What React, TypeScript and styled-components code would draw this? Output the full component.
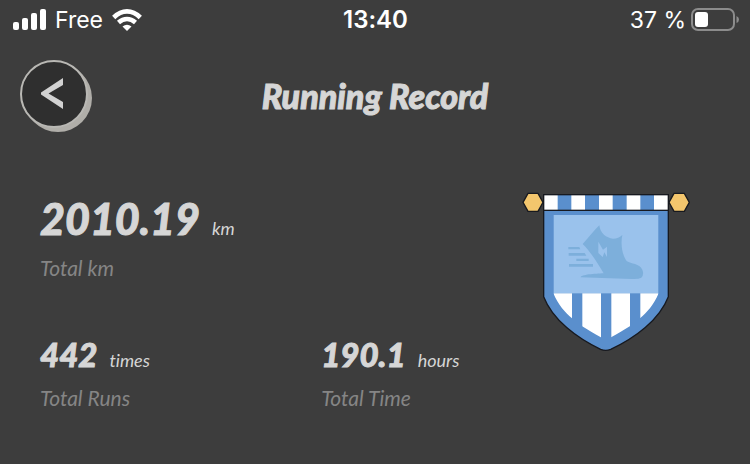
import React from "react";
import styled, { createGlobalStyle } from "styled-components";

const GlobalStyle = createGlobalStyle`
  * {
    box-sizing: border-box;
  }

  html {
    background: #3d3d3d;
  }

  body {
    margin: 0;
    color: #d6d6d6;
    font-family: Lato, "Open Sans", sans-serif;
    font-variant-ligatures: none;
  }
`;

const StatusBar = styled.div`
  display: grid;
  grid-template-columns: 1fr auto 1fr;
  align-items: center;
  height: 40px;
  padding: 0 11px 0 12px;
  color: #fff;
  font-family: Inter, "Liberation Sans", sans-serif;
  font-size: 23px;
  line-height: 28px;
`;

const StatusGroup = styled.div<{ $end?: boolean }>`
  display: flex;
  align-items: center;
  justify-content: ${({ $end }) => ($end ? "flex-end" : "flex-start")};
  gap: ${({ $end }) => ($end ? "5px" : "9px")};
`;

const Clock = styled.time`
  font-size: 24px;
  font-weight: 600;
`;

const Header = styled.header`
  display: grid;
  grid-template-columns: 72px 1fr 72px;
  align-items: center;
  padding: 20px;
`;

const BackButton = styled.button`
  display: flex;
  align-items: center;
  justify-content: center;
  width: 68px;
  height: 68px;
  margin-bottom: 4px;
  padding: 0 5px 0 0;
  border: 2px solid #b9b8b4;
  border-radius: 50%;
  background: #2f2f2f;
  box-shadow: 2px 2px 0 #b0aea9, 4px 4px 0 #b0aea9;
  cursor: pointer;
`;

const Title = styled.h1`
  margin: 0;
  font-size: 34px;
  font-style: italic;
  font-weight: 900;
  line-height: 40px;
  text-align: center;
  -webkit-text-stroke: 1px currentColor;
`;

const Summary = styled.main`
  display: flex;
  align-items: flex-start;
  padding: 38px 60px 38px 40px;
`;

const Stats = styled.dl`
  flex: 1;
  display: grid;
  grid-template-columns: 7fr 5fr;
  row-gap: 56px;
  margin: 5px 0 0;
  font-style: italic;
`;

const StatItem = styled.div<{ $wide?: boolean }>`
  display: flex;
  flex-direction: column-reverse;
  gap: ${({ $wide }) => ($wide ? "2px" : "8px")};
  grid-column: ${({ $wide }) => ($wide ? "1 / -1" : "auto")};
`;

const Label = styled.dt`
  color: #858585;
  font-size: 21px;
  line-height: 28px;
`;

const Value = styled.dd<{ $large?: boolean }>`
  display: flex;
  align-items: baseline;
  gap: 12px;
  margin: 0;
  font-size: ${({ $large }) => ($large ? "43px" : "33px")};
  font-weight: 900;
  line-height: ${({ $large }) => ($large ? "48px" : "32px")};
  -webkit-text-stroke: 1px currentColor;
`;

const Unit = styled.span`
  font-size: 18px;
  font-weight: 400;
  -webkit-text-stroke: 0;
`;

function SignalIcon() {
  return (
    <svg width="34" height="22" viewBox="0 0 34 22" fill="#fff" aria-hidden="true">
      <rect x="1" y="13" width="6" height="8" rx="2" />
      <rect x="10" y="9" width="6" height="12" rx="2" />
      <rect x="19" y="4" width="6" height="17" rx="2" />
      <rect x="28" y="0" width="6" height="21" rx="2" />
    </svg>
  );
}

function WifiIcon() {
  return (
    <svg width="30" height="22" viewBox="0 0 30 22" aria-hidden="true">
      <g fill="none" stroke="#fff" strokeWidth="4.600">
        <path d="M1.700 8.500Q8 2.400 15 2.400T28.300 8.500" />
        <path d="M6.500 13.500Q10.500 10 15 10T23.500 13.500" />
      </g>
      <path d="M10.500 17.500Q15 14 19.500 17.500L15 22Z" fill="#fff" />
    </svg>
  );
}

function BatteryIcon() {
  return (
    <svg width="48" height="24" viewBox="0 0 48 24" aria-hidden="true">
      <rect x="1" y="1" width="42" height="21" rx="6" fill="none" stroke="#8c8c8c" strokeWidth="2" />
      <rect x="4" y="4" width="13" height="15" rx="3" fill="#fff" />
      <path d="M45.5 8Q48 9 48 11.500T45.500 15Z" fill="#8c8c8c" />
    </svg>
  );
}

function BackIcon() {
  return (
    <svg width="24" height="32" viewBox="0 0 24 32" aria-hidden="true">
      <path d="M23 0V7L8.500 15.500L23 24V31L1 16.500V14.500Z" fill="#d2d2d2" />
    </svg>
  );
}

function PennantBadge() {
  return (
    <svg width="168" height="164" viewBox="36 30 504 492" role="img" aria-label="Running badge">
      <defs>
        <clipPath id="pennant-inner">
          <path d="M130 105H446V340C431 375 411 397 390 415C366 437 330 458 288 480C246 458 210 437 186 415C165 397 145 375 130 340Z" />
        </clipPath>
      </defs>
      <path
        d="M101 88H475V350C448 420 375 474 302 508Q287 514 272 508C201 474 128 420 101 350Z"
        fill="#5a8fcd"
        stroke="#17191f"
        strokeWidth="4"
      />
      <g clipPath="url(#pennant-inner)">
        <rect x="130" y="105" width="316" height="235" fill="#9ac2ec" />
        <g fill="#fff">
          <rect x="130" y="340" width="56" height="150" />
          <rect x="217" y="340" width="56" height="150" />
          <rect x="304" y="340" width="56" height="150" />
          <rect x="391" y="340" width="55" height="150" />
        </g>
      </g>
      <g fill="#7dafdb">
        <path d="M268 136C270 160 289 174 309 176Q326 176 337 165C331 194 337 225 350 243C364 252 388 250 397 269Q403 284 394 293Q386 298 365 297L212 292C212 284 255 281 281 280C265 253 245 219 218 192C235 174 250 153 268 136Z" />
        <path d="M175 201H208L211 208H175ZM176 219H224L229 227H176ZM199 236H236V243H199ZM177 252H249V260H177Z" />
      </g>
      <path d="M265 185L279 209L291 200V231L283 217L278 231L265 219Z" fill="#9ac2ec" />
      <rect x="101" y="44" width="374" height="47" fill="#fff" />
      <g fill="#5a8fcd">
        <rect x="143" y="44" width="41" height="47" />
        <rect x="225" y="44" width="42" height="47" />
        <rect x="308" y="44" width="42" height="47" />
        <rect x="391" y="44" width="41" height="47" />
      </g>
      <rect x="101" y="44" width="374" height="47" fill="none" stroke="#17191f" strokeWidth="4" />
      <g fill="#f3c66d" stroke="#17191f" strokeWidth="4">
        <path d="M54 40H84L99 67L84 94H54L39 67Z" />
        <path d="M492 40H523L538 67L523 94H492L477 67Z" />
      </g>
    </svg>
  );
}

type StatProps = {
  label: string;
  value: string;
  unit: string;
  large?: boolean;
};

function Stat({ label, value, unit, large }: StatProps) {
  return (
    <StatItem $wide={large}>
      <Label>{label}</Label>
      <Value $large={large}>
        {value}
        <Unit>{unit}</Unit>
      </Value>
    </StatItem>
  );
}

function App() {
  return (
    <>
      <GlobalStyle />
      <StatusBar>
        <StatusGroup>
          <SignalIcon />
          <span>Free</span>
          <WifiIcon />
        </StatusGroup>
        <Clock>13:40</Clock>
        <StatusGroup $end>
          <span>37 %</span>
          <BatteryIcon />
        </StatusGroup>
      </StatusBar>

      <Header>
        <BackButton type="button" aria-label="Back">
          <BackIcon />
        </BackButton>
        <Title>Running Record</Title>
      </Header>

      <Summary>
        <Stats>
          <Stat label="Total km" value="2010.19" unit="km" large />
          <Stat label="Total Runs" value="442" unit="times" />
          <Stat label="Total Time" value="190.1" unit="hours" />
        </Stats>
        <PennantBadge />
      </Summary>
    </>
  );
}

export default App;
